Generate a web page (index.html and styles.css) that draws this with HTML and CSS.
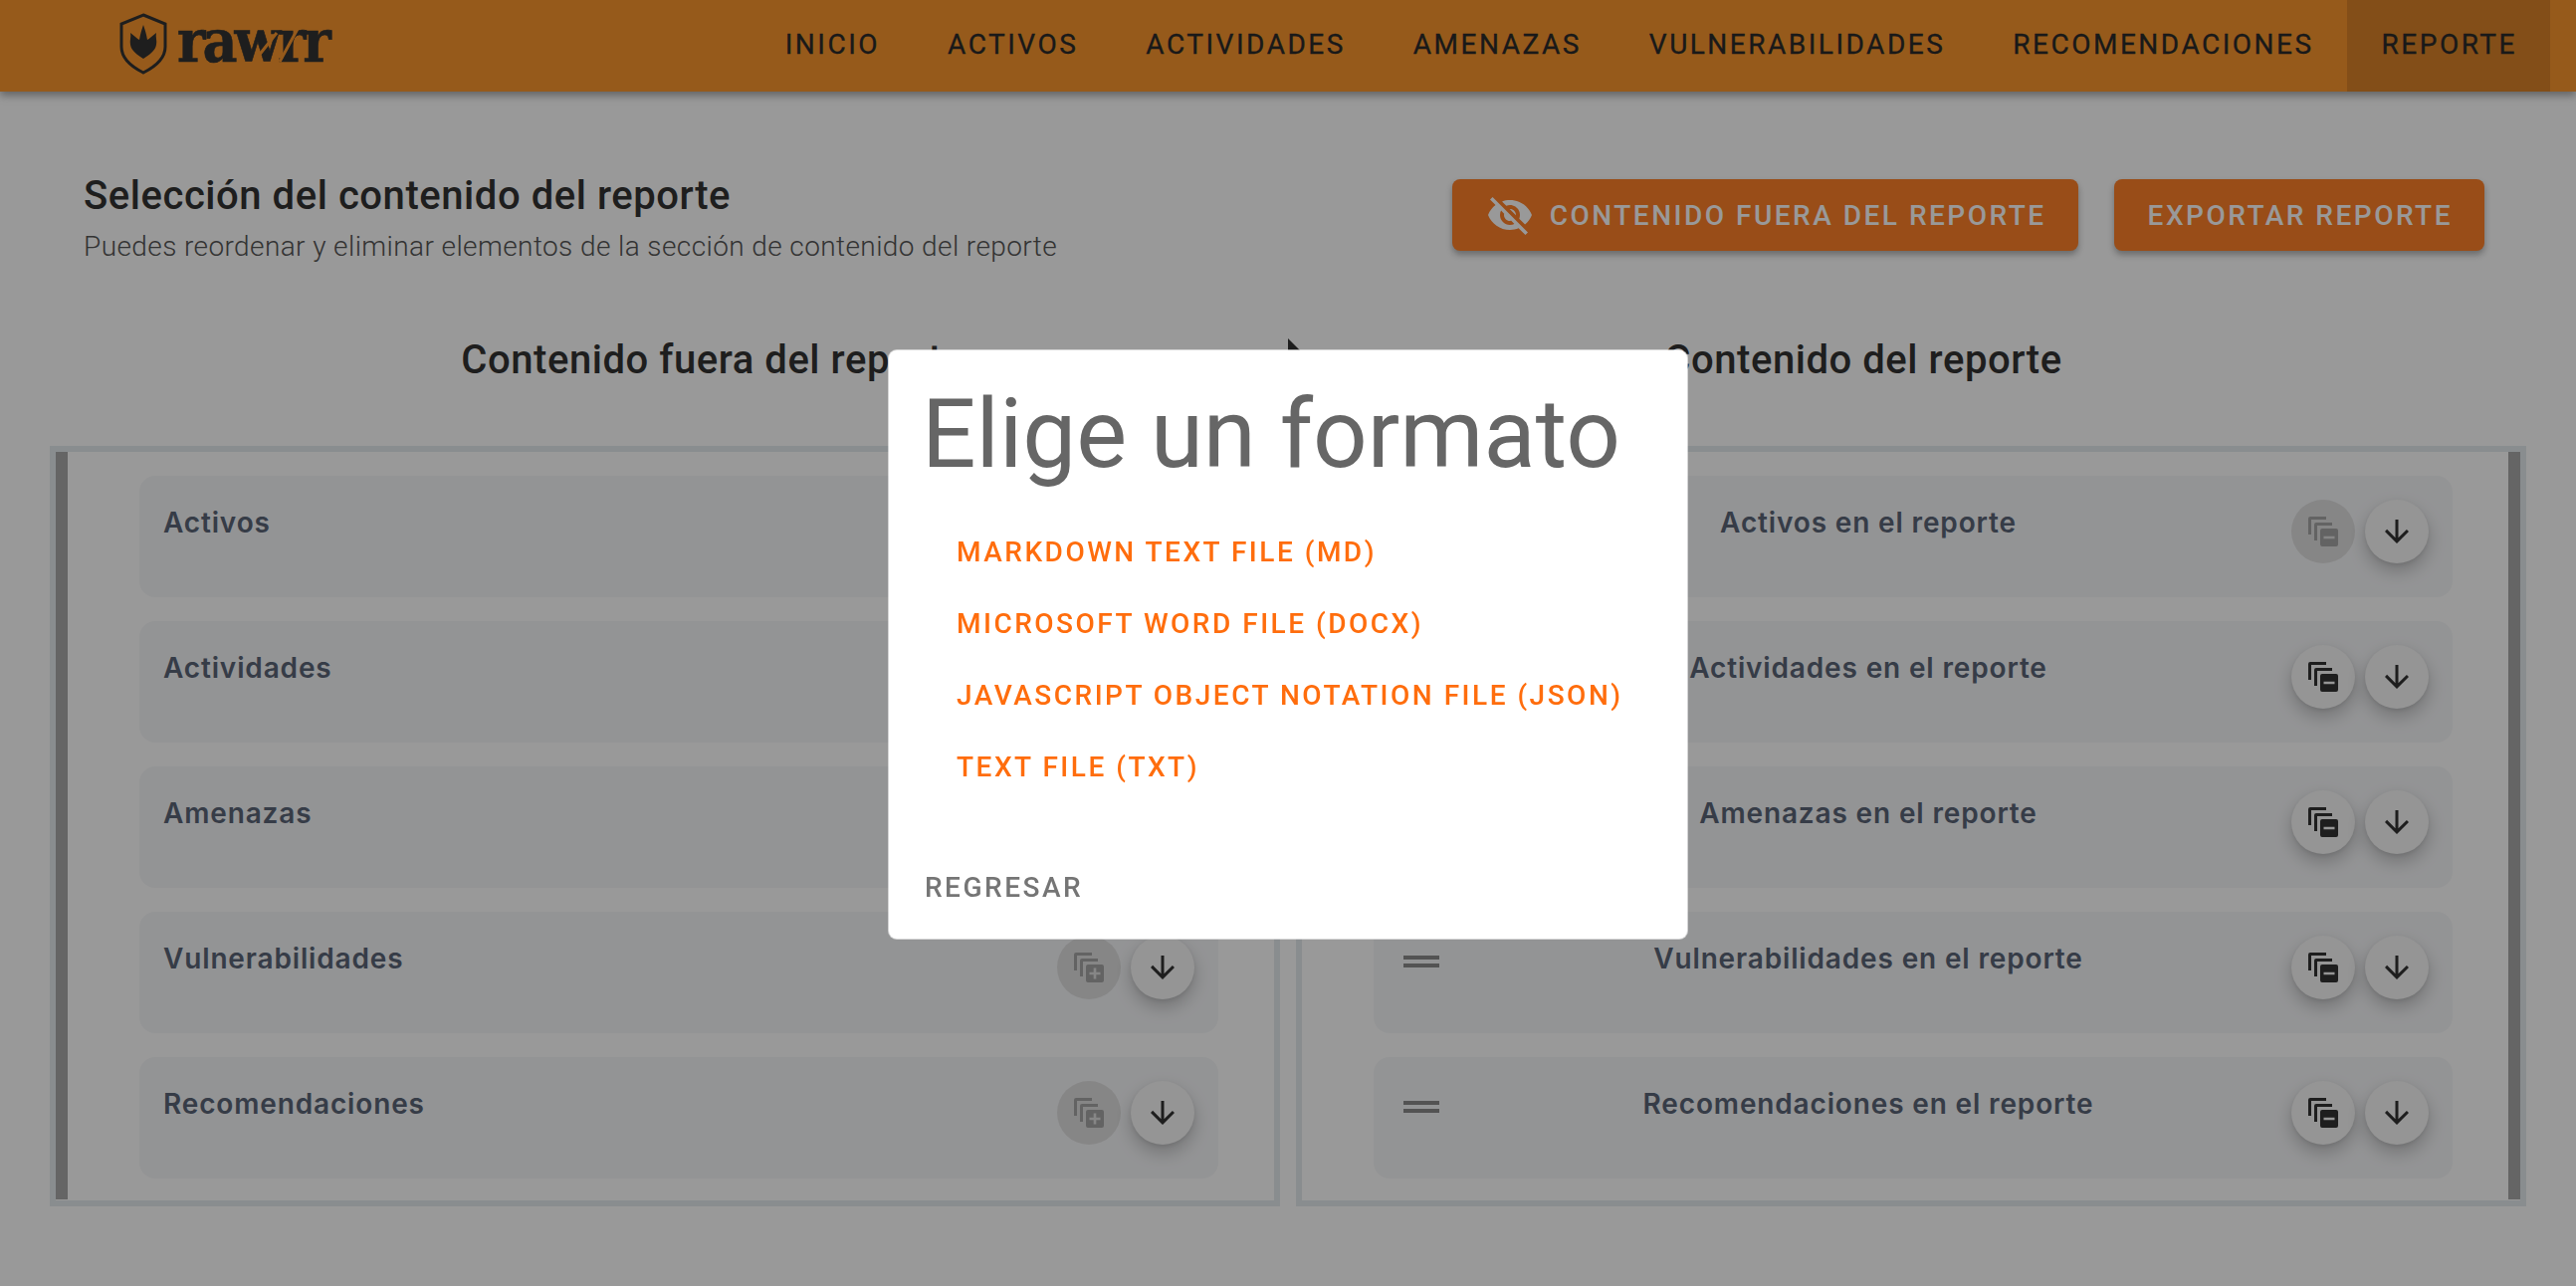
FILE: index.html

```html
<html lang="es">
<head>
    <meta charset="UTF-8">
    <title>Rawrr - Reporte</title>
    <link rel="stylesheet" href="styles.css">
</head>
<body>
    <svg width="0" height="0" class="defs">
        <defs>
            <path id="arrow" d="M20 12l-1.41-1.41L13 16.17V4h-2v12.17l-5.58-5.59L4 12l8 8 8-8z"/>
            <path id="queue-add" fill-rule="evenodd" d="M2 0h16v3H3v15H0V2a2 2 0 0 1 2-2zM8 6h16v3H9v15H6V8a2 2 0 0 1 2-2zM14 12h14a2 2 0 0 1 2 2v14a2 2 0 0 1-2 2H14a2 2 0 0 1-2-2V14a2 2 0 0 1 2-2zM19.700 15.500v4.200h-4.200v2.600h4.200v4.200h2.600v-4.200h4.200v-2.600h-4.200v-4.200z"/>
            <path id="queue-remove" fill-rule="evenodd" d="M2 0h16v3H3v15H0V2a2 2 0 0 1 2-2zM8 6h16v3H9v15H6V8a2 2 0 0 1 2-2zM14 12h14a2 2 0 0 1 2 2v14a2 2 0 0 1-2 2H14a2 2 0 0 1-2-2V14a2 2 0 0 1 2-2zM15.500 19.700v2.600h11v-2.600z"/>
        </defs>
    </svg>

    <header class="appbar">
        <a class="logo">
            <svg class="shield" viewBox="0 0 48 62">
                <path class="shield-line" d="M24 2 L46 11 V34 C46 46 36 54 24 60 C12 54 2 46 2 34 V11 Z"/>
                <path class="shield-foot" d="M24 12 C26 18 27 21 28 27 C30 26 33 23 37 20 C36 24 38 28 37 32 C36 38 30 42 24 46 C18 42 12 38 11 32 C10 28 12 24 11 20 C15 23 18 26 20 27 C21 21 22 18 24 12 Z"/>
            </svg>
            <span class="logo-text">rawrr</span>
            <svg class="logo-cut" viewBox="0 0 60 40">
                <path d="M22 7 L3 31 M43 3 L25 36"/>
            </svg>
        </a>
        <nav class="nav">
            <a class="nav-item">Inicio</a>
            <a class="nav-item">Activos</a>
            <a class="nav-item">Actividades</a>
            <a class="nav-item">Amenazas</a>
            <a class="nav-item">Vulnerabilidades</a>
            <a class="nav-item">Recomendaciones</a>
            <a class="nav-item active">Reporte</a>
        </nav>
    </header>

    <main class="page">
        <section class="top">
            <div>
                <h2 class="title">Selección del contenido del reporte</h2>
                <p class="subtitle">Puedes reordenar y eliminar elementos de la sección de contenido del reporte</p>
            </div>
            <div class="actions">
                <button class="btn">
                    <svg class="btn-icon" viewBox="0 0 24 24"><path d="M12 7c2.76 0 5 2.24 5 5 0 .65-.13 1.26-.36 1.83l2.92 2.92c1.51-1.26 2.7-2.89 3.43-4.75-1.73-4.39-6-7.500-11-7.500-1.400 0-2.740.25-3.980.7l2.160 2.160C10.740 7.130 11.350 7 12 7zM2 4.270l2.280 2.280.46.46C3.080 8.300 1.780 10.020 1 12c1.730 4.390 6 7.500 11 7.500 1.550 0 3.030-.3 4.380-.84l.42.42L19.730 22 21 20.730 3.270 3 2 4.270zM7.530 9.800l1.550 1.550c-.05.21-.08.43-.08.65 0 1.660 1.340 3 3 3 .22 0 .44-.03.65-.08l1.550 1.550c-.67.33-1.410.53-2.200.53-2.760 0-5-2.240-5-5 0-.79.2-1.530.53-2.200zm4.310-.78l3.150 3.150.02-.16c0-1.660-1.340-3-3-3l-.17.01z"/></svg>
                    Contenido fuera del reporte
                </button>
                <button class="btn">Exportar reporte</button>
            </div>
        </section>

        <section class="headings">
            <h3 class="col-title out">Contenido fuera del reporte</h3>
            <h3 class="col-title in">Contenido del reporte</h3>
            <svg class="swap-arrow" viewBox="0 0 24 24"><path d="M0 0 L24 24 L0 48 Z"/></svg>
        </section>

        <section class="panels">
            <div class="panel left">
                <div class="card">
                    <span class="card-label">Activos</span>
                    <div class="card-btns">
                        <button class="fab off"><svg class="ico-queue" viewBox="0 0 30 30"><use href="#queue-add"/></svg></button>
                        <button class="fab"><svg class="ico-arrow" viewBox="0 0 24 24"><use href="#arrow"/></svg></button>
                    </div>
                </div>
                <div class="card">
                    <span class="card-label">Actividades</span>
                    <div class="card-btns">
                        <button class="fab off"><svg class="ico-queue" viewBox="0 0 30 30"><use href="#queue-add"/></svg></button>
                        <button class="fab"><svg class="ico-arrow" viewBox="0 0 24 24"><use href="#arrow"/></svg></button>
                    </div>
                </div>
                <div class="card">
                    <span class="card-label">Amenazas</span>
                    <div class="card-btns">
                        <button class="fab off"><svg class="ico-queue" viewBox="0 0 30 30"><use href="#queue-add"/></svg></button>
                        <button class="fab"><svg class="ico-arrow" viewBox="0 0 24 24"><use href="#arrow"/></svg></button>
                    </div>
                </div>
                <div class="card">
                    <span class="card-label">Vulnerabilidades</span>
                    <div class="card-btns">
                        <button class="fab off"><svg class="ico-queue" viewBox="0 0 30 30"><use href="#queue-add"/></svg></button>
                        <button class="fab"><svg class="ico-arrow" viewBox="0 0 24 24"><use href="#arrow"/></svg></button>
                    </div>
                </div>
                <div class="card">
                    <span class="card-label">Recomendaciones</span>
                    <div class="card-btns">
                        <button class="fab off"><svg class="ico-queue" viewBox="0 0 30 30"><use href="#queue-add"/></svg></button>
                        <button class="fab"><svg class="ico-arrow" viewBox="0 0 24 24"><use href="#arrow"/></svg></button>
                    </div>
                </div>
            </div>

            <div class="panel right">
                <div class="card">
                    <span class="handle"></span>
                    <span class="card-label center">Activos en el reporte</span>
                    <div class="card-btns">
                        <button class="fab off"><svg class="ico-queue" viewBox="0 0 30 30"><use href="#queue-remove"/></svg></button>
                        <button class="fab"><svg class="ico-arrow" viewBox="0 0 24 24"><use href="#arrow"/></svg></button>
                    </div>
                </div>
                <div class="card">
                    <span class="handle"></span>
                    <span class="card-label center">Actividades en el reporte</span>
                    <div class="card-btns">
                        <button class="fab"><svg class="ico-queue" viewBox="0 0 30 30"><use href="#queue-remove"/></svg></button>
                        <button class="fab"><svg class="ico-arrow" viewBox="0 0 24 24"><use href="#arrow"/></svg></button>
                    </div>
                </div>
                <div class="card">
                    <span class="handle"></span>
                    <span class="card-label center">Amenazas en el reporte</span>
                    <div class="card-btns">
                        <button class="fab"><svg class="ico-queue" viewBox="0 0 30 30"><use href="#queue-remove"/></svg></button>
                        <button class="fab"><svg class="ico-arrow" viewBox="0 0 24 24"><use href="#arrow"/></svg></button>
                    </div>
                </div>
                <div class="card">
                    <span class="handle"></span>
                    <span class="card-label center">Vulnerabilidades en el reporte</span>
                    <div class="card-btns">
                        <button class="fab"><svg class="ico-queue" viewBox="0 0 30 30"><use href="#queue-remove"/></svg></button>
                        <button class="fab"><svg class="ico-arrow" viewBox="0 0 24 24"><use href="#arrow"/></svg></button>
                    </div>
                </div>
                <div class="card">
                    <span class="handle"></span>
                    <span class="card-label center">Recomendaciones en el reporte</span>
                    <div class="card-btns">
                        <button class="fab"><svg class="ico-queue" viewBox="0 0 30 30"><use href="#queue-remove"/></svg></button>
                        <button class="fab"><svg class="ico-arrow" viewBox="0 0 24 24"><use href="#arrow"/></svg></button>
                    </div>
                </div>
            </div>
        </section>
    </main>

    <div class="backdrop">
        <div class="dialog">
            <h1 class="dialog-title">Elige un formato</h1>
            <ul class="format-list">
                <li><a class="format">Markdown text file (md)</a></li>
                <li><a class="format">Microsoft Word file (docx)</a></li>
                <li><a class="format">JavaScript Object Notation file (json)</a></li>
                <li><a class="format">Text file (txt)</a></li>
            </ul>
            <a class="back">Regresar</a>
        </div>
    </div>
</body>
</html>
```

FILE: styles.css

```css
* {
    box-sizing: border-box;
}

html, body {
    height: 100%;
}

body {
    margin: 0;
    overflow: hidden;
    background-color: #fff;
    font-family: Roboto, "Liberation Sans", sans-serif;
    color: #222;
}

.defs {
    display: block;
}

/* app bar */
.appbar {
    display: flex;
    align-items: stretch;
    justify-content: space-between;
    height: 92px;
    padding: 0 26px 0 120px;
    background-color: #fb972e;
    box-shadow: 0 4px 8px rgba(0, 0, 0, 0.35);
    position: relative;
}

.logo {
    display: flex;
    align-items: center;
    position: relative;
}

.shield {
    width: 48px;
    height: 62px;
    margin-top: -4px;
}

.shield-line {
    fill: none;
    stroke: #333;
    stroke-width: 3;
}

.shield-foot {
    fill: #333;
}

.logo-text {
    margin: -10px 0 0 10px;
    font-family: "DejaVu Serif Condensed", "DejaVu Serif", serif;
    font-weight: 700;
    font-size: 60px;
    line-height: 1;
    letter-spacing: -3px;
    -webkit-text-stroke: 0.6px #333;
    color: #333;
}

.logo-cut {
    position: absolute;
    left: 136px;
    top: 26px;
    width: 60px;
    height: 40px;
}

.logo-cut path {
    fill: none;
    stroke: #fb972e;
    stroke-width: 3;
}

.nav {
    display: flex;
}

.nav-item {
    display: flex;
    align-items: center;
    padding: 0 33px 3px 35px;
    font-size: 28px;
    font-weight: 400;
    letter-spacing: 2.5px;
    text-transform: uppercase;
    -webkit-text-stroke: 0.3px #2a2a2a;
    color: #2a2a2a;
}

.nav-item.active {
    background-color: rgba(0, 0, 0, 0.13);
}

/* page */
.page {
    padding: 0 50px;
}

.top {
    display: flex;
    justify-content: space-between;
    padding: 81px 42px 0 34px;
}

.title {
    margin: 0;
    font-size: 40px;
    font-weight: 500;
    line-height: 48px;
    letter-spacing: 0.55px;
    color: #333;
}

.subtitle {
    margin: 7px 0 0;
    font-size: 28px;
    font-weight: 300;
    line-height: 40px;
    letter-spacing: 0.4px;
    color: #555;
}

.actions {
    display: flex;
    gap: 36px;
    margin-top: 7px;
}

.btn {
    display: flex;
    align-items: center;
    gap: 16px;
    height: 72px;
    padding: 0 32px 0 34px;
    border: none;
    border-radius: 8px;
    background-color: #ff8028;
    box-shadow: 0 4px 6px rgba(0, 0, 0, 0.3);
    font-family: Roboto, sans-serif;
    font-size: 28px;
    font-weight: 500;
    letter-spacing: 2.5px;
    text-transform: uppercase;
    color: #fff;
}

.btn-icon {
    width: 48px;
    height: 48px;
    fill: #fff;
}

.headings {
    display: grid;
    grid-template-columns: 1fr 1fr;
    gap: 16px;
    margin-top: 70px;
    position: relative;
}

.col-title {
    margin: 0;
    font-size: 40px;
    font-weight: 500;
    line-height: 48px;
    letter-spacing: 0.55px;
    text-align: center;
    color: #333;
}

.col-title.out {
    padding-left: 96px;
}

.col-title.in {
    padding-right: 96px;
}

.swap-arrow {
    position: absolute;
    left: 1244px;
    top: 2px;
    width: 48px;
    height: 48px;
    fill: #333;
}

.panels {
    display: grid;
    grid-template-columns: 1fr 1fr;
    gap: 16px;
    margin-top: 62px;
}

.panel {
    display: flex;
    flex-direction: column;
    gap: 24px;
    height: 764px;
    border: 6px solid #e4ebef;
    padding-top: 24px;
    position: relative;
}

.panel.left {
    padding-left: 84px;
    padding-right: 56px;
}

.panel.right {
    padding-left: 72px;
    padding-right: 68px;
}

/* scrollbar thumb */
.panel::after {
    content: "";
    position: absolute;
    top: 0;
    bottom: 1px;
    width: 12px;
    background-color: #a8a8a8;
}

.panel.left::after {
    left: 0;
}

.panel.right::after {
    right: 0;
}

.card {
    display: flex;
    justify-content: space-between;
    height: 122px;
    padding: 24px;
    border-radius: 16px;
    background-color: #f6f7f9;
}

.card-label {
    padding-top: 3px;
    font-family: Inter, sans-serif;
    font-size: 28px;
    font-weight: 600;
    line-height: 40px;
    letter-spacing: 0.85px;
    color: #5a6577;
}

.card-label.center {
    flex: 1;
    padding-left: 6px;
    text-align: center;
}

.handle {
    display: block;
    width: 36px;
    height: 12px;
    margin: 20px 0 0 6px;
    border-top: 4px solid #8a8a8a;
    border-bottom: 4px solid #8a8a8a;
}

.card-btns {
    display: flex;
    gap: 10px;
}

.fab {
    display: flex;
    align-items: center;
    justify-content: center;
    width: 64px;
    height: 64px;
    padding: 0;
    border: none;
    border-radius: 50%;
    background-color: #f8f8f8;
    box-shadow: 0 8px 18px rgba(0, 0, 0, 0.22), 0 2px 4px rgba(0, 0, 0, 0.08);
}

.fab.off {
    background-color: #e0e0e0;
    box-shadow: none;
}

.ico-queue {
    width: 30px;
    height: 30px;
    fill: #333;
}

.fab.off .ico-queue {
    fill: #a6a6a6;
}

.ico-arrow {
    width: 36px;
    height: 36px;
    fill: #333;
}

/* dialog */
.backdrop {
    position: fixed;
    inset: 0;
    display: flex;
    align-items: center;
    justify-content: center;
    background-color: rgba(0, 0, 0, 0.4);
}

.dialog {
    display: flex;
    flex-direction: column;
    align-items: flex-start;
    width: 802px;
    height: 591px;
    margin-top: 2px;
    padding: 0 36px;
    border-radius: 8px;
    background-color: #fff;
    box-shadow: 0 0 0 1px rgba(255, 255, 255, 0.6);
}

.dialog-title {
    margin: 28px 0 0 -3px;
    font-size: 96px;
    font-weight: 400;
    line-height: 112px;
    color: #666;
}

.format-list {
    margin: 27px 0 0;
    padding: 0 0 0 32px;
    list-style: none;
}

.format-list li {
    height: 72px;
    display: flex;
    align-items: center;
}

.format {
    font-size: 28px;
    font-weight: 500;
    letter-spacing: 2.5px;
    text-transform: uppercase;
    color: #ff6d0d;
}

.back {
    margin-top: 68px;
    font-size: 28px;
    font-weight: 500;
    letter-spacing: 2.5px;
    text-transform: uppercase;
    color: #757575;
}
```
